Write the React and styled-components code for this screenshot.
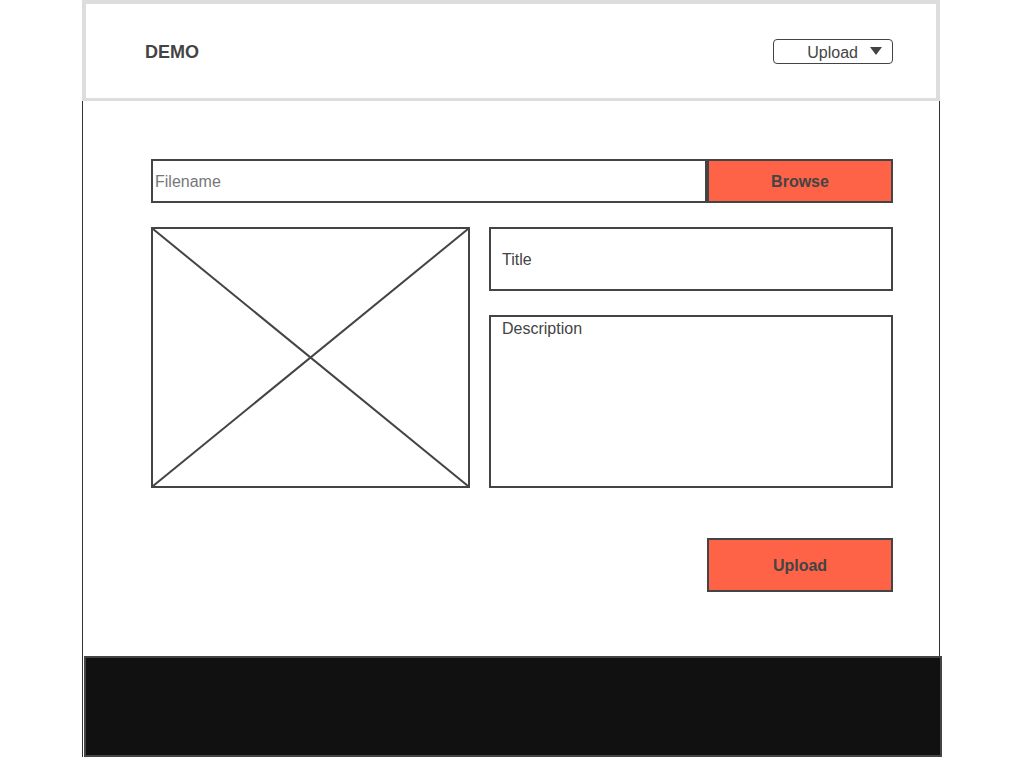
import styled, { createGlobalStyle } from "styled-components";

const GlobalStyle = createGlobalStyle`
  body {
    margin: 0;
    background: #fff;
    font-family: "Liberation Sans", Arial, sans-serif;
    color: #444;
  }
`;

const Page = styled.div`
  margin-left: 82px;
  width: 860px;
  height: 757px;
  display: flex;
  flex-direction: column;
`;

const Header = styled.header`
  box-sizing: border-box;
  width: 858px;
  height: 101px;
  border: 4px solid #ddd;
  border-bottom-width: 3px;
  display: flex;
  align-items: center;
  justify-content: space-between;
  padding: 0 43px 0 59px;
`;

const Logo = styled.div`
  font-size: 18px;
  font-weight: bold;
  color: #444;
  margin-top: 2px;
`;

const Dropdown = styled.div`
  box-sizing: border-box;
  width: 120px;
  height: 25px;
  border: 1px solid #444;
  border-radius: 4px;
  display: flex;
  align-items: center;
  justify-content: flex-end;
  gap: 12px;
  padding: 3px 10px 0 0;
  font-size: 16px;
  color: #444;
`;

const Caret = styled.span`
  width: 0;
  height: 0;
  border-left: 6px solid transparent;
  border-right: 6px solid transparent;
  border-top: 8px solid #444;
  margin-top: -4px;
`;

const Main = styled.main`
  box-sizing: border-box;
  width: 858px;
  height: 555px;
  border-left: 1px solid #333;
  border-right: 1px solid #333;
  padding: 58px 46px 0 68px;
  display: flex;
  flex-direction: column;
`;

const FileRow = styled.div`
  display: flex;
  height: 44px;
`;

const FileInput = styled.div`
  box-sizing: border-box;
  width: 556px;
  border: 2px solid #444;
  display: flex;
  align-items: center;
  padding: 1px 0 0 2px;
  font-size: 16px;
  color: #777;
`;

const ActionButton = styled.div`
  box-sizing: border-box;
  width: 186px;
  height: ${(p) => p.$h || 44}px;
  background: #ff6347;
  border: 2px solid #444;
  display: flex;
  align-items: center;
  justify-content: center;
  padding-top: 1px;
  font-size: 16px;
  font-weight: bold;
  color: #444;
`;

const Grid = styled.div`
  display: flex;
  gap: 19px;
  margin-top: 24px;
`;

const Placeholder = styled.div`
  box-sizing: border-box;
  width: 319px;
  height: 261px;
  border: 2px solid #444;
  svg {
    display: block;
    width: 100%;
    height: 100%;
  }
`;

const Fields = styled.div`
  width: 404px;
  display: flex;
  flex-direction: column;
  gap: 24px;
`;

const Field = styled.div`
  box-sizing: border-box;
  height: ${(p) => p.$h}px;
  border: 2px solid #444;
  display: flex;
  align-items: ${(p) => (p.$top ? "flex-start" : "center")};
  padding: ${(p) => (p.$top ? "3px 11px" : "1px 11px 0")};
  font-size: 16px;
  color: #444;
`;

const SubmitRow = styled.div`
  display: flex;
  justify-content: flex-end;
  margin-top: 50px;
`;

const FooterRow = styled.div`
  border-left: 1px solid #333;
  padding-left: 1px;
  height: 101px;
`;

const Footer = styled.footer`
  box-sizing: border-box;
  width: 858px;
  height: 101px;
  background: #111;
  border: 2px solid #444;
`;

export default function App() {
  return (
    <>
      <GlobalStyle />
      <Page>
        <Header>
          <Logo>DEMO</Logo>
          <Dropdown>
            Upload
            <Caret />
          </Dropdown>
        </Header>
        <Main>
          <FileRow>
            <FileInput>Filename</FileInput>
            <ActionButton>Browse</ActionButton>
          </FileRow>
          <Grid>
            <Placeholder>
              <svg viewBox="0 0 315 257" preserveAspectRatio="none">
                <line x1="0" y1="0" x2="315" y2="257" stroke="#444" strokeWidth="2" />
                <line x1="315" y1="0" x2="0" y2="257" stroke="#444" strokeWidth="2" />
              </svg>
            </Placeholder>
            <Fields>
              <Field $h={64}>Title</Field>
              <Field $h={173} $top>
                Description
              </Field>
            </Fields>
          </Grid>
          <SubmitRow>
            <ActionButton $h={54}>Upload</ActionButton>
          </SubmitRow>
        </Main>
        <FooterRow>
          <Footer />
        </FooterRow>
      </Page>
    </>
  );
}
